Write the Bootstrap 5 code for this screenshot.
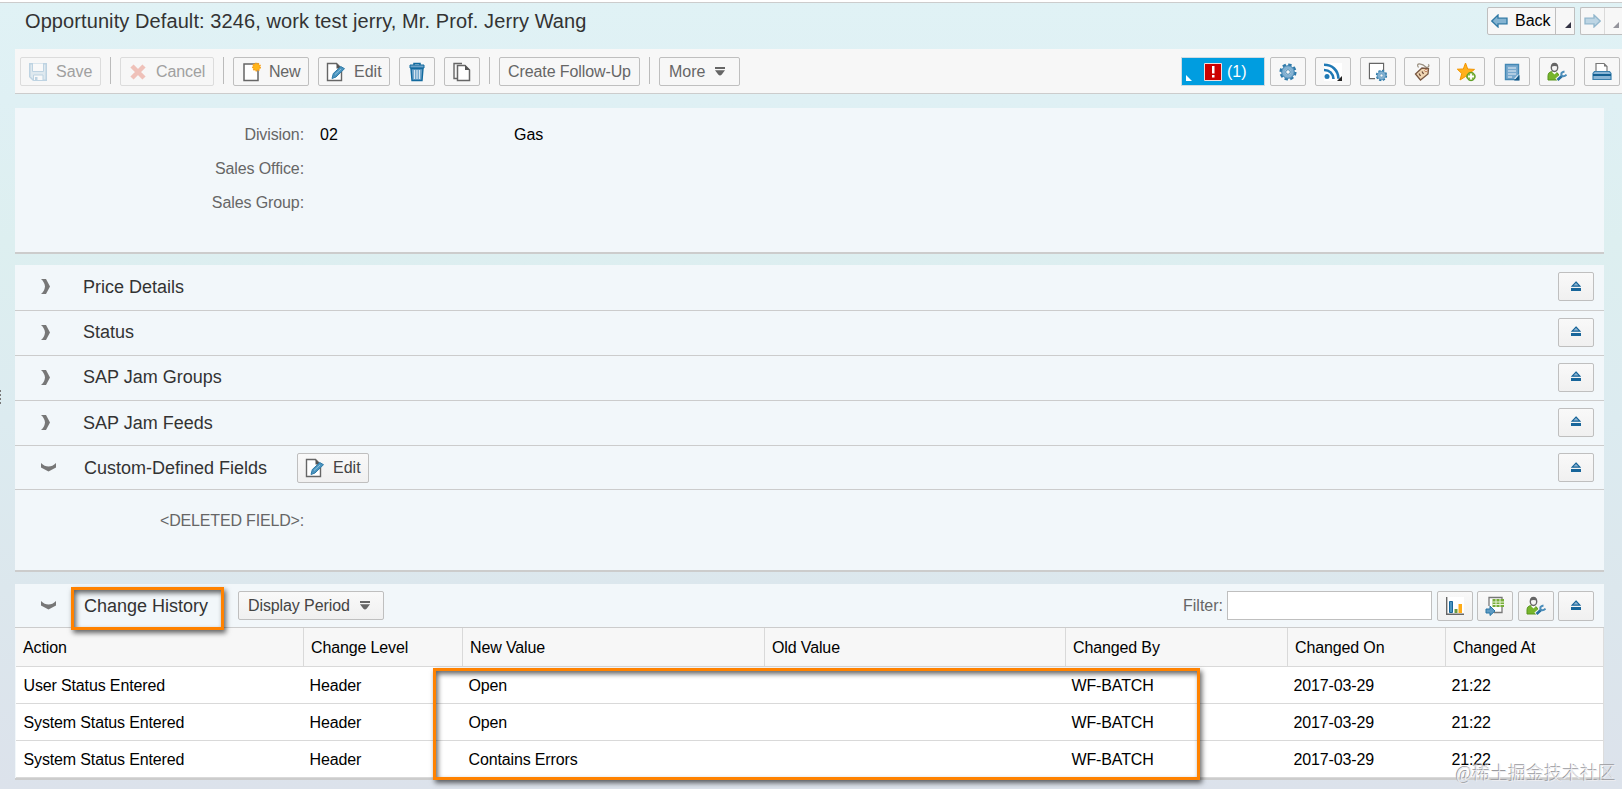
<!DOCTYPE html>
<html lang="en">
<head>
<meta charset="utf-8">
<title>Opportunity Default</title>
<link rel="stylesheet" href="https://cdn.jsdelivr.net/npm/bootstrap@5.3.0/dist/css/bootstrap.min.css">
<style>
body{width:1622px;height:789px;overflow:hidden;font:16px/20px "Liberation Sans",Arial,sans-serif;color:#000;background:linear-gradient(#e0f2f5 0,#dff0f4 100px,#ddeff0 240px,#dcebf0 420px,#dce7ed 590px,#dce2eb 789px)}
svg{flex:none}
.topline{height:3px;background:#fff;border-bottom:1px solid #ccc}
.titlebar{height:46px;padding:4px 0 0 25px}
.titlebar h1{font-size:20px;line-height:28px;color:#333;letter-spacing:.09px}
.btn.sap{height:29px;padding:0 8px;border:1px solid #bfbfbf;border-radius:2px;background:linear-gradient(#f9f9f9,#f0f0f0);color:#666;font-size:16px;line-height:26px;display:flex;align-items:center;flex:none;white-space:nowrap}
.btn.flat{background:#f7f7f7}
.btn.sq{width:36px;padding:0;justify-content:center}
.btn.sap:disabled{opacity:1;color:#a0a0a0;border-color:#dcdcdc}
.btn.sap:disabled svg{opacity:.3}
.toolbar{margin-left:15px;height:45px;background:#f7f7f7;border-bottom:1px solid #ccc;padding:8px 2px 0 5px}
.g9{gap:9px}
.vsep{width:1px;height:27px;background:#bbb;flex:none}
.alertbox{width:84px;height:29px;background:#009de0;border:1px solid #cfdbe2;color:#fff;margin-right:-4px;padding-left:4px;line-height:27px}
.panel{margin-left:15px;width:1589px;background:#f2f7fa}
.thick{border-bottom:2px solid #ccc}
.first{margin-top:14px;height:146px;padding-top:10px}
.frow{height:34px;line-height:34px}
.flabel{width:289px;text-align:right;color:#666;flex:none;margin-right:16px;letter-spacing:-.1px}
.deleted{letter-spacing:-.17px}
.sec{height:45px;border-bottom:1px solid #ccc;padding-right:10px;color:#333;font-size:18px}
.closed{padding-bottom:2px}
.sec .chev{width:66px;flex:none;padding-left:26px;display:flex}
.navgrp{height:28px;border:1px solid #bfbfbf;border-radius:2px 0 0 2px;background:#f7f7f7}
.navgrp .corner{width:19px;border-left:1px solid #bfbfbf;position:relative}
.corner::after{content:"";position:absolute;right:3px;bottom:6px;border:3px solid transparent;border-right-color:#334;border-bottom-color:#334}
.hist{table-layout:fixed;width:1588px;margin:0 0 0 1px;background:#fff;border-collapse:separate;border-spacing:0;border-right:1px solid #ddd}
.hist th{height:39px;font-weight:400;background:#f7f7f7;border-bottom:1px solid #d9d9d9;border-right:1px solid #d9d9d9;padding:1px 0 0 7px;letter-spacing:-.13px}
.hist td{height:37px;border-bottom:1px solid #d9d9d9;padding:1px 0 0 5.500px;letter-spacing:-.14px}
.hist th:last-child{border-right:0}
.hist td:first-child{padding-left:7.500px}
.frame{position:absolute;border:3px solid #ff8200;box-shadow:2px 3px 5px rgba(0,0,0,.6),inset 2px 3px 5px rgba(0,0,0,.6);pointer-events:none}
.wm{position:absolute;left:1456px;top:761px;font:18px/26px "Liberation Serif","Noto Sans CJK SC",sans-serif;font-weight:300;color:#ededf0;text-shadow:-1px -1px 0 #9a9a9e;white-space:nowrap}
.grip{position:absolute;left:0;top:390px;width:1px;height:16px;background:repeating-linear-gradient(#777 0 2px,transparent 2px 4px)}
</style>
</head>
<body class="position-relative">
<svg width="0" height="0" class="position-absolute">
<symbol id="save" viewBox="0 0 18 18"><path d="M0 0h18v18H4l-4-4z" fill="#3c83b3"/><path d="M1.500 1.500h15v15h-12l-3-3z" fill="#a9cbe0"/><path d="M3.500 0h11v8.500h-11z" fill="#fff" stroke="#3c83b3"/><path d="M4.500 12h9.500v5.500H4.500z" fill="#fff" stroke="#3c83b3"/><path d="M6 14h2.500v4H6z" fill="#3c83b3"/></symbol>
<symbol id="cross" viewBox="0 0 16 16"><path d="M2 2l12 12M14 2L2 14" stroke="#e0482c" stroke-width="4.500"/></symbol>
<symbol id="new" viewBox="0 0 18 20"><path d="M1 2h14v16.500H1z" fill="#fff" stroke="#666" stroke-width="1.500"/><circle cx="13.500" cy="5" r="3.600" fill="#ffb61a" stroke="#f9a11b" stroke-width="1.800" stroke-dasharray="1.500 1"/></symbol>
<symbol id="edit" viewBox="0 0 19 20"><path d="M1.500 1.500h9l5 5v12h-14z" fill="#fff" stroke="#666" stroke-width="1.400"/><path d="M10.500 1.500v5h5z" fill="#555"/><path d="M6 16.500l1.300-5 7.500-7 3.700 2.200L10 15z" fill="#4b94bf" stroke="#2f7ba8"/><path d="M9 12.500L15 7" stroke="#8fc2de"/></symbol>
<symbol id="trash" viewBox="0 0 16 20"><path d="M5 3V1.500h6V3" fill="none" stroke="#126a9e" stroke-width="1.500"/><path d="M1 3h14v3H1z" fill="#6da2c8" stroke="#126a9e"/><path d="M2 6.500h12l-1 12H3z" fill="#69a0c8" stroke="#126a9e" stroke-width="1.400"/><path d="M5.500 8v9M8 8v9M10.500 8v9" stroke="#d6e5f0" stroke-width="1.200"/></symbol>
<symbol id="copy" viewBox="0 0 18 20"><path d="M9 1.500H1v15h3" fill="none" stroke="#666" stroke-width="1.400"/><path d="M4.500 3.500h7.500l4.500 4.500v10.500h-12z" fill="#fff" stroke="#666" stroke-width="1.500"/><path d="M12 3v5h5z" fill="#555"/></symbol>
<symbol id="menu" viewBox="0 0 10 9"><path d="M0 0h10v2H0zM0 3.300h10L6.800 7.500Q5 9.500 3.200 7.500z" fill="#666"/></symbol>
<symbol id="gear" viewBox="0 0 18 18"><g fill="none" stroke="#2d79a9"><circle cx="9" cy="9" r="7.300" stroke-width="2.500" stroke-dasharray="3.400 2.330"/><circle cx="9" cy="9" r="4.700" stroke="#83b1d2" stroke-width="3.800"/><circle cx="9" cy="9" r="6.300" stroke-width=".8"/><circle cx="9" cy="9" r="2.300" fill="#f7f7f7" stroke-width=".9"/></g></symbol>
<symbol id="rss" viewBox="0 0 20 20"><path d="M1 1h18v18H1z" fill="#fff"/><g fill="none" stroke="#1f79b5" stroke-width="2.600"><path d="M1 2.800c8 0 14.200 5 14.500 14M1 8c5.500 0 9 3.500 9.500 9"/></g><circle cx="4" cy="14.500" r="2.500" fill="#1f79b5"/><path d="M19 14v5h-5z" fill="#222"/></symbol>
<symbol id="pageset" viewBox="0 0 20 20"><path d="M7 16.500H1.500v-15h14V8" fill="#fff" stroke="#666" stroke-width="1.300"/><path d="M2 2h13v5H8v9H2z" fill="#fff"/></symbol>
<symbol id="tag" viewBox="0 0 18 20"><path d="M5.500 5.500C2 .5 9 1 13.500 5.500c3-.5 3-2.500 1.500-3" fill="none" stroke="#9b9080" stroke-width="1.200"/><path d="M2.500 12L9 6l6.500.5-.5 5.500L7.500 18z" fill="#f0d6b4" stroke="#795842" stroke-width="1.300"/><path d="M6 11.500l1.500 2.500M9 9.500l1.500 2.500" stroke="#6d4c39" stroke-width="1.300"/><circle cx="13" cy="8.500" r="1.200" fill="#fff" stroke="#b56a3e" stroke-width=".8"/></symbol>
<symbol id="star" viewBox="0 0 20 20"><path d="M8.500 1l2.200 6 6.800.4-5.200 4.100 1.700 6-5.500-3-5.500 3.500 1.800-6.500-4.500-4.300 6-.2z" fill="#ffb01c" stroke="#f29400"/><circle cx="14" cy="14.500" r="4.200" fill="#82b642" stroke="#579a1f"/><path d="M14 11.500v6M11 14.500h6" stroke="#fff" stroke-width="1.800"/></symbol>
<symbol id="note" viewBox="0 0 16 18"><path d="M1.500 1.500h13v15h-13z" fill="#78a9ce" stroke="#4388b5" stroke-width="1.400"/><path d="M4 5h8M4 8h8M4 11h8M4 14h4" stroke="#e7f0f6" stroke-width="1.200"/><path d="M15.500 12v5.500H10z" fill="#145987"/><path d="M14.500 12v-1l-4.500 5h1.500z" fill="#fff" opacity=".8"/></symbol>
<symbol id="user" viewBox="0 0 20 20"><path d="M1 18v-4q0-4.500 5-4.500t6 4v4.500z" fill="#77b52c" stroke="#58951d"/><path d="M4.500 9.500h6l-3 3z" fill="#fff"/><ellipse cx="7.500" cy="5.500" rx="3.200" ry="4" fill="#f5f5f5" stroke="#666" stroke-width="1.400"/><path d="M4 5q.2-4 3.500-4t3.500 4Q8 2.800 4 5z" fill="#666"/><path d="M10 18.500l6-5" stroke="#f7f7f7" stroke-width="5"/><path d="M10.500 18l5-4.500" stroke="#286fa0" stroke-width="2.800"/><path d="M17.500 9.500c-3 .5-3.500 2-3 3.500s3 2 5-.5" fill="none" stroke="#4b8dba" stroke-width="2"/></symbol>
<symbol id="print" viewBox="0 0 20 20"><path d="M4 10V1.500h8l3 3V10" fill="#fff" stroke="#777" stroke-width="1.200"/><path d="M12 1.500v3h3z" fill="#777"/><path d="M2.500 9.500h15l1.500 2v6H1v-6z" fill="#8ab5d5" stroke="#3a80ae" stroke-width="1.200"/><path d="M1 12h18v2H1z" fill="#135f91"/></symbol>
<symbol id="eject" viewBox="0 0 10 10"><path d="M5 1l4 4.200H1z" fill="#8fb4d2" stroke="#17659a" stroke-width="1.200"/><path d="M0 7h10v3H0z" fill="#17659a"/></symbol>
<symbol id="arrow" viewBox="0 0 17 14"><path d="M.8 7L7 1v3.200h9v5.600H7V13z" fill="#85b4d2" stroke="#3079a5" stroke-width="1.300"/></symbol>
<symbol id="chevr" viewBox="0 0 9 15"><path d="M0 0h5l4 7.500L5 15H0q3.500-3 4-7.500Q3.500 3 0 0z" fill="#777"/></symbol>
<symbol id="chevd" viewBox="0 0 15 9"><path d="M0 0q3.500 3.500 7.500 3.500T15 0v4.500L7.500 8.500 0 4.500z" fill="#777"/></symbol>
<symbol id="chart" viewBox="0 0 18 18"><path d="M0 0h18v18H0z" fill="#fff"/><path d="M.7 0v17.300H18" fill="none" stroke="#666" stroke-width="1.400"/><path d="M3.500 4.500h3v11h-3z" fill="#4b94bf" stroke="#17659a"/><path d="M8.500 12h3v4h-3z" fill="#6c9b42"/><path d="M12.500 7h3.500v9h-3.500z" fill="#ffac17"/></symbol>
<symbol id="export" viewBox="0 0 20 20"><path d="M4 10V1.500h13v15H9" fill="#fff" stroke="#777" stroke-width="1.300"/><path d="M7.500 3h11.500v8H7.500z" fill="#77ad38"/><path d="M11 3v8M15 3v8M7.500 6h11.500M7.500 8.500h11.500" stroke="#e9f3d9"/><path d="M1 13h4v-3l5 5-5 4.500V17H1z" fill="#5e9bc3" stroke="#2775a5"/></symbol>
</svg>

<div class="topline"></div>
<header class="titlebar d-flex justify-content-between align-items-start">
  <h1 class="m-0 fw-normal">Opportunity Default: 3246, work test jerry, Mr. Prof. Jerry Wang</h1>
  <div class="d-flex gap-1">
    <div class="navgrp d-flex align-items-stretch" style="width:88px">
      <span class="d-flex align-items-center flex-grow-1" style="padding-left:3px"><svg width="17" height="14"><use href="#arrow"/></svg><span style="margin-left:7px">Back</span></span><span class="corner"></span>
    </div>
    <div class="navgrp d-flex align-items-stretch border-end-0" style="width:42px;margin-left:1px">
      <span class="d-flex align-items-center flex-grow-1 opacity-50" style="padding-left:3px"><svg width="17" height="14" style="transform:scaleX(-1)"><use href="#arrow"/></svg></span><span class="corner opacity-50" style="width:18px"></span>
    </div>
  </div>
</header>

<nav class="toolbar d-flex justify-content-between">
  <div class="d-flex g9">
    <button class="btn sap flat" style="width:81px" disabled><svg width="18" height="18"><use href="#save"/></svg><span style="margin-left:9px">Save</span></button>
    <span class="vsep"></span>
    <button class="btn sap flat" style="width:94px;padding-left:9px" disabled><svg width="16" height="16"><use href="#cross"/></svg><span style="margin-left:10px;letter-spacing:-.1px">Cancel</span></button>
    <span class="vsep"></span>
    <button class="btn sap flat" style="width:76px;padding-left:9px"><svg width="18" height="20"><use href="#new"/></svg><span style="margin-left:8px;letter-spacing:-.2px">New</span></button>
    <button class="btn sap flat" style="width:72px;padding-left:7px"><svg width="19" height="20"><use href="#edit"/></svg><span style="margin-left:9px">Edit</span></button>
    <button class="btn sap flat sq"><svg width="16" height="20"><use href="#trash"/></svg></button>
    <button class="btn sap flat sq"><svg width="18" height="20"><use href="#copy"/></svg></button>
    <span class="vsep"></span>
    <button class="btn sap flat" style="width:141px;letter-spacing:-.1px">Create Follow-Up</button>
    <span class="vsep"></span>
    <button class="btn sap flat" style="width:81px;padding-left:9px">More<svg width="10" height="9" style="margin-left:10px"><use href="#menu"/></svg></button>
  </div>
  <div class="d-flex g9">
    <div class="alertbox d-flex align-items-center"><svg width="6" height="6" style="margin-top:12px"><path d="M0 0v6h6z" fill="#fff"/></svg><svg width="18" height="18" style="margin:1px 5px 0 12px"><path d="M.5.5h17v17H.5z" fill="#c00" stroke="#f3dcdc"/><path d="M8 3h2.500v7.500H8zM8 12h2.500v2.500H8z" fill="#fff"/></svg>(1)</div>
    <button class="btn sap flat sq"><svg width="18" height="18"><use href="#gear"/></svg></button>
    <button class="btn sap flat sq"><svg width="20" height="20"><use href="#rss"/></svg></button>
    <button class="btn sap flat sq"><svg width="20" height="20"><use href="#pageset"/><use href="#gear" x="7.500" y="7.500" width="12" height="12"/></svg></button>
    <button class="btn sap flat sq" style="margin-left:-1px"><svg width="18" height="20"><use href="#tag"/></svg></button>
    <button class="btn sap flat sq"><svg width="20" height="20"><use href="#star"/></svg></button>
    <button class="btn sap flat sq"><svg width="16" height="18"><use href="#note"/></svg></button>
    <button class="btn sap flat sq"><svg width="20" height="20"><use href="#user"/></svg></button>
    <button class="btn sap flat sq"><svg width="20" height="20"><use href="#print"/></svg></button>
  </div>
</nav>

<section class="panel thick first">
  <div class="frow d-flex"><span class="flabel">Division:</span><span style="width:194px">02</span><span>Gas</span></div>
  <div class="frow d-flex"><span class="flabel">Sales Office:</span></div>
  <div class="frow d-flex"><span class="flabel">Sales Group:</span></div>
</section>

<section class="panel thick" style="margin-top:11px;height:307px">
  <div class="sec closed d-flex align-items-center" style="height:46px"><span class="chev"><svg width="9" height="15"><use href="#chevr"/></svg></span><span class="me-auto" style="margin-left:2px">Price Details</span><button class="btn sap sq"><svg width="10" height="10" style="margin-top:-2px"><use href="#eject"/></svg></button></div>
  <div class="sec closed d-flex align-items-center"><span class="chev"><svg width="9" height="15"><use href="#chevr"/></svg></span><span class="me-auto" style="margin-left:2px">Status</span><button class="btn sap sq"><svg width="10" height="10" style="margin-top:-2px"><use href="#eject"/></svg></button></div>
  <div class="sec closed d-flex align-items-center"><span class="chev"><svg width="9" height="15"><use href="#chevr"/></svg></span><span class="me-auto" style="margin-left:2px">SAP Jam Groups</span><button class="btn sap sq"><svg width="10" height="10" style="margin-top:-2px"><use href="#eject"/></svg></button></div>
  <div class="sec closed d-flex align-items-center"><span class="chev"><svg width="9" height="15"><use href="#chevr"/></svg></span><span class="me-auto" style="margin-left:2px;padding-top:2px">SAP Jam Feeds</span><button class="btn sap sq"><svg width="10" height="10" style="margin-top:-2px"><use href="#eject"/></svg></button></div>
  <div class="sec d-flex align-items-center" style="height:44px"><span class="chev"><svg width="15" height="9"><use href="#chevd"/></svg></span><span style="margin-left:3px;width:213px">Custom-Defined Fields</span><button class="btn sap me-auto" style="width:72px;height:30px;padding-left:7px;color:#444"><svg width="19" height="20"><use href="#edit"/></svg><span style="margin-left:9px">Edit</span></button><button class="btn sap sq"><svg width="10" height="10" style="margin-top:-2px"><use href="#eject"/></svg></button></div>
  <div class="frow d-flex" style="padding-top:14px"><span class="flabel deleted">&lt;DELETED FIELD&gt;:</span></div>
</section>

<section class="panel thick" style="margin-top:12px;height:196px">
  <div class="sec d-flex align-items-center" style="height:44px"><span class="chev"><svg width="15" height="9"><use href="#chevd"/></svg></span><span style="margin-left:3px;width:154px">Change History</span><button class="btn sap me-auto" style="width:146px;padding-left:9px;color:#444;letter-spacing:-.1px">Display Period<svg width="10" height="9" style="margin-left:10px"><use href="#menu"/></svg></button>
    <label for="filter" style="font-size:16px;color:#666;margin-right:4px">Filter:</label><input id="filter" class="form-control rounded-0 p-0" style="width:205px;height:29px;border-color:#bfbfbf;margin-right:5px">
    <button class="btn sap sq" style="height:30px"><svg width="18" height="18"><use href="#chart"/></svg></button>
    <button class="btn sap sq" style="height:30px;margin:0 5px 0 4px"><svg width="20" height="20"><use href="#export"/></svg></button>
    <button class="btn sap sq" style="height:30px;margin-right:4px"><svg width="20" height="20"><use href="#user"/></svg></button>
    <button class="btn sap sq" style="height:30px"><svg width="10" height="10" style="margin-top:-2px"><use href="#eject"/></svg></button></div>
  <table class="hist">
    <colgroup><col style="width:288px"><col style="width:159px"><col style="width:302px"><col style="width:301px"><col style="width:222px"><col style="width:158px"><col></colgroup>
    <thead><tr><th>Action</th><th>Change Level</th><th>New Value</th><th>Old Value</th><th>Changed By</th><th>Changed On</th><th>Changed At</th></tr></thead>
    <tbody>
      <tr><td>User Status Entered</td><td>Header</td><td>Open</td><td></td><td>WF-BATCH</td><td>2017-03-29</td><td>21:22</td></tr>
      <tr><td>System Status Entered</td><td>Header</td><td>Open</td><td></td><td>WF-BATCH</td><td>2017-03-29</td><td>21:22</td></tr>
      <tr><td>System Status Entered</td><td>Header</td><td>Contains Errors</td><td></td><td>WF-BATCH</td><td>2017-03-29</td><td>21:22</td></tr>
    </tbody>
  </table>
</section>

<div class="grip"></div>
<div class="frame" style="left:71px;top:587px;width:153px;height:43px"></div>
<div class="frame" style="left:433px;top:668px;width:767px;height:112px"></div>
<div class="wm">@稀土掘金技术社区</div>
<script src="https://cdn.jsdelivr.net/npm/bootstrap@5.3.0/dist/js/bootstrap.bundle.min.js"></script>
</body>
</html>
